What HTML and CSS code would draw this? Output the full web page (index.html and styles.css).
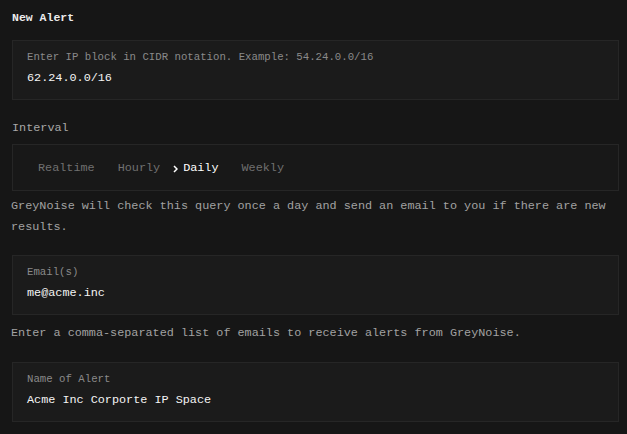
FILE: index.html
```html
<!DOCTYPE html>
<html>
<head>
<meta charset="utf-8">
<link rel="stylesheet" href="styles.css">
</head>
<body>
<div class="page">
  <h1 class="title">New Alert</h1>
  <div class="field field-first">
    <div class="field-label">Enter IP block in CIDR notation. Example: 54.24.0.0/16</div>
    <div class="field-value">62.24.0.0/16</div>
  </div>
  <div class="section-label">Interval</div>
  <div class="tabs">
    <span class="tab">Realtime</span>
    <span class="tab">Hourly</span>
    <span class="tab tab-active"><svg class="chevron" width="5" height="8" viewBox="0 0 5 8"><polyline points="1,1 4,4 1,7" fill="none" stroke="#ffffff" stroke-width="1.5"/></svg>Daily</span>
    <span class="tab">Weekly</span>
  </div>
  <p class="help help-interval">GreyNoise will check this query once a day and send an email to you if there are new results.</p>
  <div class="field field-email">
    <div class="field-label">Email(s)</div>
    <div class="field-value">me@acme.inc</div>
  </div>
  <p class="help help-email">Enter a comma-separated list of emails to receive alerts from GreyNoise.</p>
  <div class="field field-name">
    <div class="field-label">Name of Alert</div>
    <div class="field-value">Acme Inc Corporte IP Space</div>
  </div>
</div>
</body>
</html>
```
FILE: styles.css
```css
html, body {
  margin: 0;
  padding: 0;
  background: #161616;
}
body {
  font-family: "Liberation Mono", "DejaVu Sans Mono", monospace;
  font-size: 11.8px;
  color: #e8e8e8;
}
.page {
  padding: 10px 8px 0 12px;
  display: flex;
  flex-direction: column;
}
.title {
  margin: 0;
  font-size: 11.5px;
  line-height: 16px;
  font-weight: bold;
  color: #ececec;
}
.field {
  background: #1b1b1b;
  border: 1px solid #262626;
  padding: 8px 14px 11px;
}
.field-first {
  margin-top: 14px;
}
.field-email {
  margin-top: 17px;
}
.field-name {
  margin-top: 18px;
}
.field-label {
  font-size: 10.7px;
  line-height: 16px;
  color: #8a8a8a;
  margin-bottom: 3px;
}
.field-value {
  line-height: 20px;
  color: #f4f4f4;
}
.section-label {
  margin-top: 20px;
  line-height: 16px;
  color: #a8a8a8;
}
.tabs {
  margin-top: 8px;
  border: 1px solid #262626;
  background: #181818;
  padding: 15px 25px 14px;
  display: flex;
  gap: 23px;
  line-height: 16px;
}
.tab {
  position: relative;
  color: #707070;
}
.tab-active {
  color: #ffffff;
}
.chevron {
  position: absolute;
  left: -10px;
  top: 5px;
}
.help {
  margin: 0;
  line-height: 21px;
  color: #a2a2a2;
  margin-left: -1px;
}
.help-interval {
  margin-top: 5px;
}
.help-email {
  margin-top: 8px;
}
```
